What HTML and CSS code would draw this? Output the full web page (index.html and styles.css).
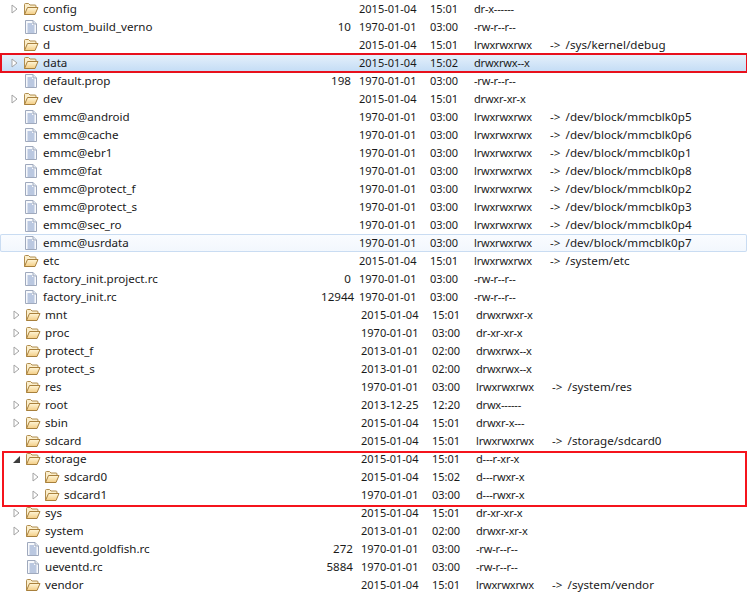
FILE: index.html
```html
<!DOCTYPE html>
<html lang="en">
<head>
<meta charset="utf-8">
<title>File Explorer</title>
<link rel="stylesheet" href="styles.css">
</head>
<body>
<svg class="defs" width="0" height="0" aria-hidden="true">
  <defs>
    <linearGradient id="fold" x1="0" y1="0" x2="0" y2="1"><stop offset="0" stop-color="#fff6d8"/><stop offset="1" stop-color="#f3cd84"/></linearGradient>
    <symbol id="folder" viewBox="0 0 16 14">
      <path d="M1.5 12.5V2.5q0-1 1-1h3l1.5 1.5h5q1 0 1 1V5" fill="#fbeecb" stroke="#b08d4e"/>
      <path d="M1.5 12.5L4.5 5.5H15L12 12.5Z" fill="url(#fold)" stroke="#a8803c" stroke-linejoin="round"/>
    </symbol>
    <symbol id="file" viewBox="0 0 12 14">
      <path d="M.5.5H8L11.5 4V13.5H.5Z" fill="#f7f9fc" stroke="#9fa9bd"/>
      <path d="M8 .5V4H11.5" fill="#dfe5ee" stroke="#9fa9bd"/>
      <path d="M2.5 4H7M2.5 6H9.5M2.5 8H9.5M2.5 10H9.5M2.5 12H9.5" stroke="#7f97c4"/>
    </symbol>
    <symbol id="closed" viewBox="0 0 7 10">
      <path d="M1 1L6 5L1 9Z" fill="#fff" stroke="#a3a3a3"/>
    </symbol>
    <symbol id="open" viewBox="0 0 7 7">
      <path d="M7 0V7H0Z" fill="#3d3d3d"/>
    </symbol>
  </defs>
</svg>
<main class="tree">
  <div class="row"><div class="name"><svg class="tw"><use href="#closed"/></svg><svg class="ic"><use href="#folder"/></svg><span>config</span></div><span class="size"></span><span>2015-01-04</span><span>15:01</span><span>dr-x------</span><span></span></div>
  <div class="row"><div class="name"><i class="tw"></i><svg class="ic"><use href="#file"/></svg><span>custom_build_verno</span></div><span class="size">10</span><span>1970-01-01</span><span>03:00</span><span>-rw-r--r--</span><span></span></div>
  <div class="row"><div class="name"><i class="tw"></i><svg class="ic"><use href="#folder"/></svg><span>d</span></div><span class="size"></span><span>2015-01-04</span><span>15:01</span><span>lrwxrwxrwx</span><span>-&gt; /sys/kernel/debug</span></div>
  <div class="row marked"><div class="name"><svg class="tw"><use href="#closed"/></svg><svg class="ic"><use href="#folder"/></svg><span>data</span></div><span class="size"></span><span>2015-01-04</span><span>15:02</span><span>drwxrwx--x</span><span></span></div>
  <div class="row"><div class="name"><i class="tw"></i><svg class="ic"><use href="#file"/></svg><span>default.prop</span></div><span class="size">198</span><span>1970-01-01</span><span>03:00</span><span>-rw-r--r--</span><span></span></div>
  <div class="row"><div class="name"><svg class="tw"><use href="#closed"/></svg><svg class="ic"><use href="#folder"/></svg><span>dev</span></div><span class="size"></span><span>2015-01-04</span><span>15:01</span><span>drwxr-xr-x</span><span></span></div>
  <div class="row"><div class="name"><i class="tw"></i><svg class="ic"><use href="#file"/></svg><span>emmc@android</span></div><span class="size"></span><span>1970-01-01</span><span>03:00</span><span>lrwxrwxrwx</span><span>-&gt; /dev/block/mmcblk0p5</span></div>
  <div class="row"><div class="name"><i class="tw"></i><svg class="ic"><use href="#file"/></svg><span>emmc@cache</span></div><span class="size"></span><span>1970-01-01</span><span>03:00</span><span>lrwxrwxrwx</span><span>-&gt; /dev/block/mmcblk0p6</span></div>
  <div class="row"><div class="name"><i class="tw"></i><svg class="ic"><use href="#file"/></svg><span>emmc@ebr1</span></div><span class="size"></span><span>1970-01-01</span><span>03:00</span><span>lrwxrwxrwx</span><span>-&gt; /dev/block/mmcblk0p1</span></div>
  <div class="row"><div class="name"><i class="tw"></i><svg class="ic"><use href="#file"/></svg><span>emmc@fat</span></div><span class="size"></span><span>1970-01-01</span><span>03:00</span><span>lrwxrwxrwx</span><span>-&gt; /dev/block/mmcblk0p8</span></div>
  <div class="row"><div class="name"><i class="tw"></i><svg class="ic"><use href="#file"/></svg><span>emmc@protect_f</span></div><span class="size"></span><span>1970-01-01</span><span>03:00</span><span>lrwxrwxrwx</span><span>-&gt; /dev/block/mmcblk0p2</span></div>
  <div class="row"><div class="name"><i class="tw"></i><svg class="ic"><use href="#file"/></svg><span>emmc@protect_s</span></div><span class="size"></span><span>1970-01-01</span><span>03:00</span><span>lrwxrwxrwx</span><span>-&gt; /dev/block/mmcblk0p3</span></div>
  <div class="row"><div class="name"><i class="tw"></i><svg class="ic"><use href="#file"/></svg><span>emmc@sec_ro</span></div><span class="size"></span><span>1970-01-01</span><span>03:00</span><span>lrwxrwxrwx</span><span>-&gt; /dev/block/mmcblk0p4</span></div>
  <div class="row hover"><div class="name"><i class="tw"></i><svg class="ic"><use href="#file"/></svg><span>emmc@usrdata</span></div><span class="size"></span><span>1970-01-01</span><span>03:00</span><span>lrwxrwxrwx</span><span>-&gt; /dev/block/mmcblk0p7</span></div>
  <div class="row"><div class="name"><i class="tw"></i><svg class="ic"><use href="#folder"/></svg><span>etc</span></div><span class="size"></span><span>2015-01-04</span><span>15:01</span><span>lrwxrwxrwx</span><span>-&gt; /system/etc</span></div>
  <div class="row"><div class="name"><i class="tw"></i><svg class="ic"><use href="#file"/></svg><span>factory_init.project.rc</span></div><span class="size">0</span><span>1970-01-01</span><span>03:00</span><span>-rw-r--r--</span><span></span></div>
  <div class="row"><div class="name"><i class="tw"></i><svg class="ic"><use href="#file"/></svg><span>factory_init.rc</span></div><span class="size">12944</span><span>1970-01-01</span><span>03:00</span><span>-rw-r--r--</span><span></span></div>
  <div class="lower">
    <div class="row"><div class="name"><svg class="tw"><use href="#closed"/></svg><svg class="ic"><use href="#folder"/></svg><span>mnt</span></div><span class="size"></span><span>2015-01-04</span><span>15:01</span><span>drwxrwxr-x</span><span></span></div>
    <div class="row"><div class="name"><svg class="tw"><use href="#closed"/></svg><svg class="ic"><use href="#folder"/></svg><span>proc</span></div><span class="size"></span><span>1970-01-01</span><span>03:00</span><span>dr-xr-xr-x</span><span></span></div>
    <div class="row"><div class="name"><svg class="tw"><use href="#closed"/></svg><svg class="ic"><use href="#folder"/></svg><span>protect_f</span></div><span class="size"></span><span>2013-01-01</span><span>02:00</span><span>drwxrwx--x</span><span></span></div>
    <div class="row"><div class="name"><svg class="tw"><use href="#closed"/></svg><svg class="ic"><use href="#folder"/></svg><span>protect_s</span></div><span class="size"></span><span>2013-01-01</span><span>02:00</span><span>drwxrwx--x</span><span></span></div>
    <div class="row"><div class="name"><i class="tw"></i><svg class="ic"><use href="#folder"/></svg><span>res</span></div><span class="size"></span><span>1970-01-01</span><span>03:00</span><span>lrwxrwxrwx</span><span>-&gt; /system/res</span></div>
    <div class="row"><div class="name"><svg class="tw"><use href="#closed"/></svg><svg class="ic"><use href="#folder"/></svg><span>root</span></div><span class="size"></span><span>2013-12-25</span><span>12:20</span><span>drwx------</span><span></span></div>
    <div class="row"><div class="name"><svg class="tw"><use href="#closed"/></svg><svg class="ic"><use href="#folder"/></svg><span>sbin</span></div><span class="size"></span><span>2015-01-04</span><span>15:01</span><span>drwxr-x---</span><span></span></div>
    <div class="row"><div class="name"><i class="tw"></i><svg class="ic"><use href="#folder"/></svg><span>sdcard</span></div><span class="size"></span><span>2015-01-04</span><span>15:01</span><span>lrwxrwxrwx</span><span>-&gt; /storage/sdcard0</span></div>
    <section class="group">
      <div class="row"><div class="name"><svg class="tw tw-open"><use href="#open"/></svg><svg class="ic"><use href="#folder"/></svg><span>storage</span></div><span class="size"></span><span>2015-01-04</span><span>15:01</span><span>d---r-xr-x</span><span></span></div>
      <div class="row"><div class="name nested"><svg class="tw"><use href="#closed"/></svg><svg class="ic"><use href="#folder"/></svg><span>sdcard0</span></div><span class="size"></span><span>2015-01-04</span><span>15:02</span><span>d---rwxr-x</span><span></span></div>
      <div class="row"><div class="name nested"><svg class="tw"><use href="#closed"/></svg><svg class="ic"><use href="#folder"/></svg><span>sdcard1</span></div><span class="size"></span><span>1970-01-01</span><span>03:00</span><span>d---rwxr-x</span><span></span></div>
    </section>
    <div class="row"><div class="name"><svg class="tw"><use href="#closed"/></svg><svg class="ic"><use href="#folder"/></svg><span>sys</span></div><span class="size"></span><span>2015-01-04</span><span>15:01</span><span>dr-xr-xr-x</span><span></span></div>
    <div class="row"><div class="name"><svg class="tw"><use href="#closed"/></svg><svg class="ic"><use href="#folder"/></svg><span>system</span></div><span class="size"></span><span>2013-01-01</span><span>02:00</span><span>drwxr-xr-x</span><span></span></div>
    <div class="row"><div class="name"><i class="tw"></i><svg class="ic"><use href="#file"/></svg><span>ueventd.goldfish.rc</span></div><span class="size">272</span><span>1970-01-01</span><span>03:00</span><span>-rw-r--r--</span><span></span></div>
    <div class="row"><div class="name"><i class="tw"></i><svg class="ic"><use href="#file"/></svg><span>ueventd.rc</span></div><span class="size">5884</span><span>1970-01-01</span><span>03:00</span><span>-rw-r--r--</span><span></span></div>
    <div class="row"><div class="name"><i class="tw"></i><svg class="ic"><use href="#folder"/></svg><span>vendor</span></div><span class="size"></span><span>2015-01-04</span><span>15:01</span><span>lrwxrwxrwx</span><span>-&gt; /system/vendor</span></div>
  </div>
</main>
</body>
</html>
```
FILE: styles.css
```css
html, body {
  margin: 0;
  background: #fff;
}
body {
  width: 747px;
  height: 599px;
  overflow: hidden;
}
.defs {
  display: block;
  height: 0;
}
.tree {
  font-family: "Noto Sans", "Liberation Sans", sans-serif;
  font-size: 11.6px;
  color: #1a1a1a;
}
.row {
  display: grid;
  grid-template-columns: 321px 30px 71px 44px 76px 1fr;
  height: 18px;
  line-height: 18px;
  white-space: nowrap;
  box-sizing: border-box;
}
.row > :nth-child(3),
.row > :nth-child(4),
.row > :nth-child(5) {
  margin-left: 8px;
  font-size: 11px;
}
.row > :nth-child(5) {
  font-kerning: none;
  letter-spacing: -0.2px;
}
.row > :nth-child(6) {
  margin-left: 8px;
  word-spacing: 2px;
  letter-spacing: 0.05px;
}
.name {
  display: flex;
  align-items: center;
  padding-left: 11px;
}
.nested {
  padding-left: 30px;
}
.tw {
  flex: none;
  width: 7px;
  height: 10px;
  margin-right: 5px;
}
.tw-open {
  height: 7px;
}
.ic {
  flex: none;
  width: 16px;
  height: 14px;
  margin-right: 4px;
}
.size {
  text-align: right;
}
.marked {
  background: linear-gradient(#e6f1fb, #c3dcf5);
  box-shadow: inset 0 0 0 1px #7da2ce;
  outline: 2px solid #e8101c;
  outline-offset: -1px;
  margin: 0 0 0 1px;
}
.marked .name {
  padding-left: 10px;
}
.marked > :nth-child(n+3) {
  position: relative;
  left: -1px;
}
.hover {
  background: linear-gradient(#fafcff, #f2f7fd);
  box-shadow: inset 0 0 0 1px #c9dcf2;
  border-radius: 2px;
}
.lower {
  padding-left: 2px;
}
.group {
  position: relative;
}
.group::after {
  content: "";
  position: absolute;
  inset: 1px 0 -3px 0;
  border: 2px solid #f5141c;
}
```
